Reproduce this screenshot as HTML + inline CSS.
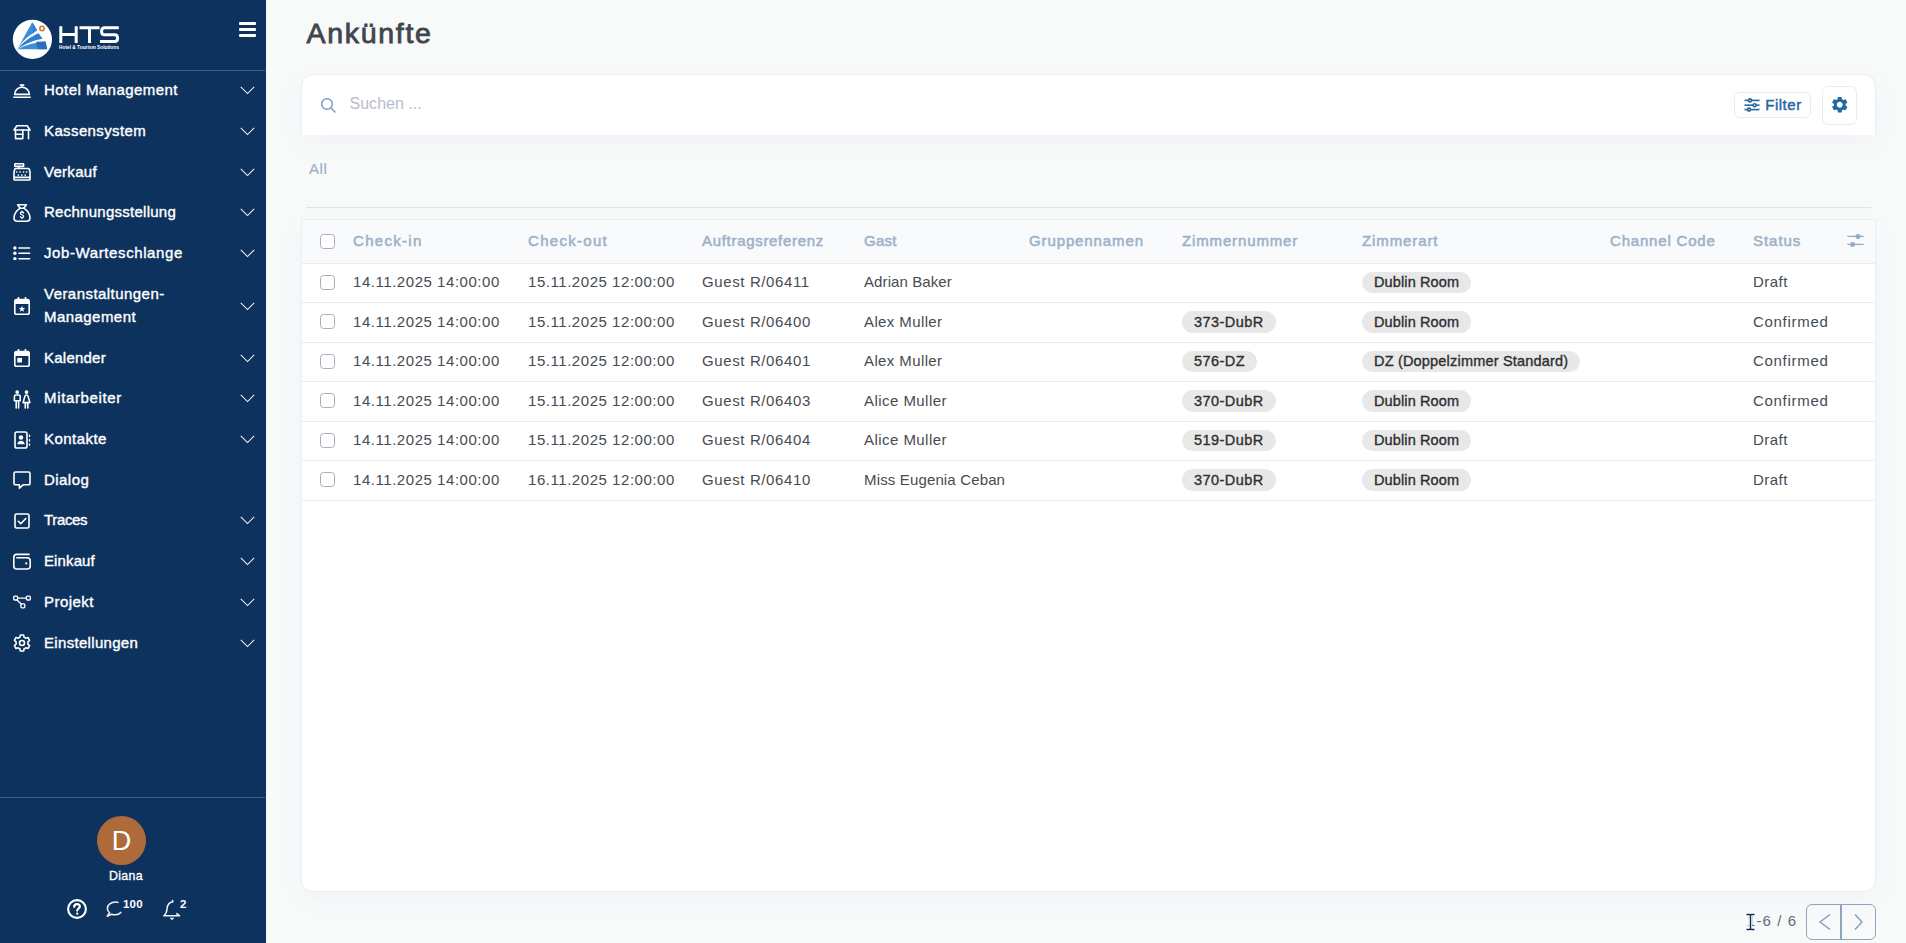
<!DOCTYPE html>
<html><head><meta charset="utf-8">
<style>
*{box-sizing:border-box;margin:0;padding:0}
html,body{width:1906px;height:943px;overflow:hidden;background:#f8fafa;font-family:"Liberation Sans",sans-serif}
#sb{position:absolute;left:0;top:0;width:266px;height:943px;background:#0e325e;color:#fff}
.hr{position:absolute;left:0;width:265px;height:1px;background:#44617f}
.tx{position:absolute;left:44px;font-size:15px;font-weight:normal;-webkit-text-stroke:0.38px #fff;letter-spacing:0.45px;line-height:23px;white-space:nowrap;color:#fff}
h1{position:absolute;left:306.5px;top:15.7px;font-size:28.5px;font-weight:normal;-webkit-text-stroke:0.85px #40464e;color:#40464e;letter-spacing:1.7px;line-height:34px}
#search{position:absolute;left:301px;top:74px;width:1575px;height:61px;background:#fff;border-radius:12px 12px 0 0;border:1px solid #e9eef5;border-bottom:none;box-shadow:0 8px 26px -2px rgba(80,90,180,0.055)}
#tab{position:absolute;left:309px;top:160px;font-size:15px;color:#9aaecb;letter-spacing:0.6px;-webkit-text-stroke:0.15px #9aaecb}
#tabline{position:absolute;left:306px;top:207px;width:1565px;height:1px;background:#dfe4ea}
#tbl{position:absolute;left:301px;top:219px;width:1575px;height:673px;background:#fff;border:1px solid #e9eef5;border-radius:0 0 12px 12px;box-shadow:0 8px 26px -2px rgba(80,90,180,0.05)}
#thead{position:absolute;left:0;top:0;width:1573px;height:44px;background:#f9fafb;border-bottom:1px solid #e7edf6}
.th{position:absolute;top:12px;font-size:15px;font-weight:normal;-webkit-text-stroke:0.55px #9db2c9;color:#9db2c9;white-space:nowrap;line-height:18px;letter-spacing:0.55px}
.row{position:absolute;left:0;width:1573px;height:40px;border-bottom:1px solid #e7edf6}
.td{position:absolute;top:8px;font-size:15px;color:#474b51;white-space:nowrap;line-height:20px;letter-spacing:0.45px}
.cb{position:absolute;left:18px;width:15px;height:15px;border:1px solid #a9adba;border-radius:3.5px;background:#fff}
.chip{position:absolute;top:8px;height:22px;line-height:22px;padding:0 12px;border-radius:11px;background:#e8e8e8;color:#2d2f31;font-weight:normal;-webkit-text-stroke:0.35px #2d2f31;letter-spacing:0.12px;font-size:14.5px;white-space:nowrap}

</style></head><body>
<div id="sb">
<svg style="position:absolute;left:0;top:0" width="130" height="70" viewBox="0 0 130 70">
<circle cx="32.4" cy="39.4" r="19.6" fill="#fff"/>
<path d="M32.2 22.2 L37.5 30.5 C29 35 22 41 17.2 49.3 Z" fill="#3b8fd9"/>
<path d="M17.6 49 C23 42 31 36.5 38.6 33.2 L42.6 38.8 C33 40.5 25 44 17.6 49 Z" fill="#2f7fcc"/>
<path d="M17.4 49.3 C26 45 35 42.2 45.5 41.5 L47.2 49.3 Z" fill="#3a90d8"/>
<path d="M36 41.8 L45.5 41.5 L47.2 49.3 L38 49.3 Z" fill="#2a6fb8"/>
<path d="M32.2 22.2 L35.2 26.8 L33.5 35 Z" fill="#2a6fb8" opacity="0.6"/>
<circle cx="42" cy="28.5" r="2.2" fill="#fff" stroke="#d2782e" stroke-width="1.5"/>
<g fill="none" stroke="#fff" stroke-width="3" stroke-linecap="butt">
<path d="M60.8 26.3 V43 M76.2 26.3 V43 M60.8 34.6 H76.2"/>
<path d="M79.5 27.8 H99.5 M89.5 27.8 V43"/>
<path d="M118.8 27.8 H104.8 Q101.6 27.8 101.6 31 V31.8 Q101.6 34.8 104.8 34.8 H114.6 Q117.6 34.8 117.6 38 V38.6 Q117.6 41.5 114.6 41.5 H100"/>
</g>
</svg>
<div style="position:absolute;left:59px;top:45px;font-size:4.8px;font-weight:bold;color:#fff;line-height:6px;white-space:nowrap">Hotel &amp; Tourism Solutions</div>
<div style="position:absolute;left:239px;top:22px;width:17px;height:3px;background:#fff;border-radius:1px"></div>
<div style="position:absolute;left:239px;top:28px;width:17px;height:3px;background:#fff;border-radius:1px"></div>
<div style="position:absolute;left:239px;top:34px;width:17px;height:3px;background:#fff;border-radius:1px"></div>
<div class="hr" style="top:70px"></div>
<svg style="position:absolute;left:13px;top:84px" width="18" height="15" viewBox="0 0 18 15" fill="none" stroke="#fff" stroke-width="1.6" stroke-linecap="round" stroke-linejoin="round" ><path d="M1.6 10.4 A7.4 7.2 0 0 1 16.4 10.4 Z" /><line x1="0.8" y1="13.3" x2="17.2" y2="13.3"/><line x1="9" y1="3.2" x2="9" y2="1.2"/><line x1="7.3" y1="1.1" x2="10.7" y2="1.1"/></svg>
<div class="tx" style="top:77.5px">Hotel Management</div>
<svg style="position:absolute;left:240px;top:86px" width="16" height="9" viewBox="0 0 16 9" fill="none" stroke="#f2f4f7" stroke-width="1.05"><path d="M0.8 0.8 L7.5 7.5 L14.2 0.8"/></svg>
<svg style="position:absolute;left:13px;top:125px" width="18" height="15" viewBox="0 0 18 15" fill="none" stroke="#fff" stroke-width="1.6" stroke-linecap="round" stroke-linejoin="round" ><path d="M3.8 0.8 H14.2 L17 5 H1 Z"/><path d="M2.5 5 V13.6 H9.8 V5"/><path d="M2.5 9.3 H9.8"/><path d="M15.5 5 V13.8"/></svg>
<div class="tx" style="top:118.5px;letter-spacing:0.386px">Kassensystem</div>
<svg style="position:absolute;left:240px;top:127px" width="16" height="9" viewBox="0 0 16 9" fill="none" stroke="#f2f4f7" stroke-width="1.05"><path d="M0.8 0.8 L7.5 7.5 L14.2 0.8"/></svg>
<svg style="position:absolute;left:13px;top:163px" width="18" height="18" viewBox="0 0 18 18" fill="none" stroke="#fff" stroke-width="1.6" stroke-linecap="round" stroke-linejoin="round" ><rect x="1.8" y="0.8" width="8.8" height="2.6" rx="0.4"/><line x1="6" y1="3.4" x2="6" y2="5.4"/><path d="M2.8 5.5 H15.2 Q16 5.5 16.3 6.3 L17 9 V16.2 Q17 17 16.2 17 H1.8 Q1 17 1 16.2 V9 L1.7 6.3 Q2 5.5 2.8 5.5 Z"/><line x1="1" y1="14.4" x2="17" y2="14.4"/><g stroke="none" fill="#fff"><rect x="2.9" y="8.3" width="1.5" height="1.4"/><rect x="6.3" y="8.3" width="1.5" height="1.4"/><rect x="9.8" y="8.3" width="1.5" height="1.4"/><rect x="12.9" y="8.3" width="1.5" height="1.4"/><rect x="4.6" y="11.4" width="1.5" height="1.4"/><rect x="8.1" y="11.4" width="1.5" height="1.4"/><rect x="11.5" y="11.4" width="1.5" height="1.4"/></g></svg>
<div class="tx" style="top:159.5px;letter-spacing:0.283px">Verkauf</div>
<svg style="position:absolute;left:240px;top:168px" width="16" height="9" viewBox="0 0 16 9" fill="none" stroke="#f2f4f7" stroke-width="1.05"><path d="M0.8 0.8 L7.5 7.5 L14.2 0.8"/></svg>
<svg style="position:absolute;left:13px;top:203px" width="18" height="19" viewBox="0 0 18 19" fill="none" stroke="#fff" stroke-width="1.6" stroke-linecap="round" stroke-linejoin="round" ><path d="M4.6 1.8 H13.4 L10.8 5.2 H7.2 Z"/><path d="M7.2 5.2 C3 8 1 11.5 1 15 C1 17.2 2.3 18.2 4.5 18.2 H13.5 C15.7 18.2 17 17.2 17 15 C17 11.5 15 8 10.8 5.2"/><path d="M10.5 10 C10.3 9.3 9.7 9 9 9 C8 9 7.4 9.6 7.4 10.3 C7.4 12 10.6 11.5 10.6 13.3 C10.6 14 10 14.6 9 14.6 C8.2 14.6 7.6 14.2 7.4 13.6" stroke-width="1.3"/><line x1="9" y1="8" x2="9" y2="9" stroke-width="1.2"/><line x1="9" y1="14.6" x2="9" y2="15.6" stroke-width="1.2"/></svg>
<div class="tx" style="top:199.5px;letter-spacing:0.263px">Rechnungsstellung</div>
<svg style="position:absolute;left:240px;top:208px" width="16" height="9" viewBox="0 0 16 9" fill="none" stroke="#f2f4f7" stroke-width="1.05"><path d="M0.8 0.8 L7.5 7.5 L14.2 0.8"/></svg>
<svg style="position:absolute;left:13px;top:246px" width="18" height="14" viewBox="0 0 18 14" fill="none" stroke="#fff" stroke-width="1.6" stroke-linecap="round" stroke-linejoin="round" ><g stroke="none" fill="#fff"><circle cx="1.9" cy="2" r="1.7"/><circle cx="1.9" cy="7.3" r="1.7"/><circle cx="1.9" cy="12.7" r="1.7"/></g><line x1="6" y1="2" x2="16.6" y2="2"/><line x1="6" y1="7.3" x2="16.6" y2="7.3"/><line x1="6" y1="12.7" x2="16.6" y2="12.7"/></svg>
<div class="tx" style="top:240.5px;letter-spacing:0.600px">Job-Warteschlange</div>
<svg style="position:absolute;left:240px;top:249px" width="16" height="9" viewBox="0 0 16 9" fill="none" stroke="#f2f4f7" stroke-width="1.05"><path d="M0.8 0.8 L7.5 7.5 L14.2 0.8"/></svg>
<svg style="position:absolute;left:14px;top:297px" width="16" height="18" viewBox="0 0 16 18" fill="none" stroke="#fff" stroke-width="1.6" stroke-linecap="round" stroke-linejoin="round" ><rect x="0.8" y="2.6" width="14.4" height="14.6" rx="1.8"/><rect x="0.8" y="2.6" width="14.4" height="4.4" fill="#fff" stroke="none"/><line x1="4.5" y1="0.4" x2="4.5" y2="3"/><line x1="11.5" y1="0.4" x2="11.5" y2="3"/><path d="M8.00 8.70 L8.85 10.93 L11.23 11.05 L9.38 12.55 L10.00 14.85 L8.00 13.55 L6.00 14.85 L6.62 12.55 L4.77 11.05 L7.15 10.93 Z" fill="#fff" stroke="none"/></svg>
<div class="tx" style="top:282px">Veranstaltungen-<br>Management</div>
<svg style="position:absolute;left:240px;top:302px" width="16" height="9" viewBox="0 0 16 9" fill="none" stroke="#f2f4f7" stroke-width="1.05"><path d="M0.8 0.8 L7.5 7.5 L14.2 0.8"/></svg>
<svg style="position:absolute;left:14px;top:349px" width="16" height="18" viewBox="0 0 16 18" fill="none" stroke="#fff" stroke-width="1.6" stroke-linecap="round" stroke-linejoin="round" ><rect x="0.8" y="2.6" width="14.4" height="14.6" rx="1.8"/><rect x="0.8" y="2.6" width="14.4" height="4.4" fill="#fff" stroke="none"/><line x1="4.5" y1="0.4" x2="4.5" y2="3"/><line x1="11.5" y1="0.4" x2="11.5" y2="3"/><rect x="3.3" y="8.9" width="4.7" height="4.6" fill="#fff" stroke="none"/></svg>
<div class="tx" style="top:345.5px;letter-spacing:0.236px">Kalender</div>
<svg style="position:absolute;left:240px;top:354px" width="16" height="9" viewBox="0 0 16 9" fill="none" stroke="#f2f4f7" stroke-width="1.05"><path d="M0.8 0.8 L7.5 7.5 L14.2 0.8"/></svg>
<svg style="position:absolute;left:13px;top:390px" width="18" height="19" viewBox="0 0 18 19" fill="none" stroke="#fff" stroke-width="1.6" stroke-linecap="round" stroke-linejoin="round" ><g stroke="none" fill="#fff"><circle cx="4.2" cy="2.1" r="1.9"/><circle cx="13.5" cy="2.1" r="1.9"/></g><path d="M1.4 10.8 V6.6 C1.4 5.6 2 5 3 5 H5.6 C6.6 5 7.2 5.6 7.2 6.6 V10.8 Z"/><line x1="3.2" y1="11" x2="3.2" y2="17.9"/><line x1="5.6" y1="11" x2="5.6" y2="17.9"/><path d="M13.5 5 C12.6 5 12.1 5.6 11.8 6.6 L10.1 12.6 H16.9 L15.2 6.6 C14.9 5.6 14.4 5 13.5 5 Z"/><line x1="12.3" y1="12.6" x2="12.3" y2="17.9"/><line x1="14.8" y1="12.6" x2="14.8" y2="17.9"/></svg>
<div class="tx" style="top:385.5px;letter-spacing:0.650px">Mitarbeiter</div>
<svg style="position:absolute;left:240px;top:394px" width="16" height="9" viewBox="0 0 16 9" fill="none" stroke="#f2f4f7" stroke-width="1.05"><path d="M0.8 0.8 L7.5 7.5 L14.2 0.8"/></svg>
<svg style="position:absolute;left:14px;top:431px" width="17" height="18" viewBox="0 0 17 18" fill="none" stroke="#fff" stroke-width="1.6" stroke-linecap="round" stroke-linejoin="round" ><rect x="1" y="1" width="12" height="16" rx="1.8"/><g stroke="none" fill="#fff"><circle cx="7" cy="6.5" r="2.2"/><path d="M3.3 13.3 C3.5 11 5 9.8 7 9.8 C9 9.8 10.5 11 10.7 13.3 Z"/></g><g stroke-width="1.3"><line x1="15.5" y1="4.2" x2="15.5" y2="5.6"/><line x1="15.5" y1="8.6" x2="15.5" y2="10"/><line x1="15.5" y1="12.9" x2="15.5" y2="14.3"/></g></svg>
<div class="tx" style="top:426.5px">Kontakte</div>
<svg style="position:absolute;left:240px;top:435px" width="16" height="9" viewBox="0 0 16 9" fill="none" stroke="#f2f4f7" stroke-width="1.05"><path d="M0.8 0.8 L7.5 7.5 L14.2 0.8"/></svg>
<svg style="position:absolute;left:13px;top:471px" width="18" height="18" viewBox="0 0 18 18" fill="none" stroke="#fff" stroke-width="1.6" stroke-linecap="round" stroke-linejoin="round" ><path d="M2.4 1 H15.6 Q17 1 17 2.4 V12.4 Q17 13.8 15.6 13.8 H10.2 L6.4 17.2 V13.8 H2.4 Q1 13.8 1 12.4 V2.4 Q1 1 2.4 1 Z"/></svg>
<div class="tx" style="top:467.5px">Dialog</div>
<svg style="position:absolute;left:14px;top:513px" width="16" height="16" viewBox="0 0 16 16" fill="none" stroke="#fff" stroke-width="1.6" stroke-linecap="round" stroke-linejoin="round" ><rect x="1" y="1" width="14" height="14" rx="1.5"/><path d="M4.3 8.3 L6.8 10.8 L11.8 5.5"/></svg>
<div class="tx" style="top:507.5px;letter-spacing:-0.350px">Traces</div>
<svg style="position:absolute;left:240px;top:516px" width="16" height="9" viewBox="0 0 16 9" fill="none" stroke="#f2f4f7" stroke-width="1.05"><path d="M0.8 0.8 L7.5 7.5 L14.2 0.8"/></svg>
<svg style="position:absolute;left:13px;top:553px" width="18" height="17" viewBox="0 0 18 17" fill="none" stroke="#fff" stroke-width="1.6" stroke-linecap="round" stroke-linejoin="round" ><path d="M16 1.4 H3.8 Q0.8 1.4 0.8 4.4 V13 Q0.8 16 3.8 16 H14.2 Q17.2 16 17.2 13 V7.8 Q17.2 4.8 14.2 4.8 H3.8"/><circle cx="13.2" cy="10.4" r="1.1" fill="#fff" stroke="none"/></svg>
<div class="tx" style="top:548.5px;letter-spacing:0.117px">Einkauf</div>
<svg style="position:absolute;left:240px;top:557px" width="16" height="9" viewBox="0 0 16 9" fill="none" stroke="#f2f4f7" stroke-width="1.05"><path d="M0.8 0.8 L7.5 7.5 L14.2 0.8"/></svg>
<svg style="position:absolute;left:13px;top:595px" width="18" height="14" viewBox="0 0 18 14" fill="none" stroke="#fff" stroke-width="1.6" stroke-linecap="round" stroke-linejoin="round" ><g stroke-width="1.35"><rect x="0.7" y="1.1" width="3.9" height="3.9" rx="1"/><rect x="13.4" y="1.1" width="3.9" height="3.9" rx="1"/><rect x="7.9" y="8.9" width="3.9" height="3.9" rx="1"/><line x1="4.6" y1="3.05" x2="13.4" y2="3.05"/><line x1="4" y1="5" x2="8.1" y2="9.1"/></g></svg>
<div class="tx" style="top:589.5px">Projekt</div>
<svg style="position:absolute;left:240px;top:598px" width="16" height="9" viewBox="0 0 16 9" fill="none" stroke="#f2f4f7" stroke-width="1.05"><path d="M0.8 0.8 L7.5 7.5 L14.2 0.8"/></svg>
<svg style="position:absolute;left:13px;top:634px" width="18" height="18" viewBox="0 0 18 18" fill="none" stroke="#fff" stroke-width="1.6" stroke-linecap="round" stroke-linejoin="round" ><path d="M7.4 1 H10.6 L11.1 3.2 C11.7 3.4 12.3 3.8 12.8 4.2 L15 3.5 L16.6 6.3 L14.9 7.8 C15 8.6 15 9.4 14.9 10.2 L16.6 11.7 L15 14.5 L12.8 13.8 C12.3 14.2 11.7 14.6 11.1 14.8 L10.6 17 H7.4 L6.9 14.8 C6.3 14.6 5.7 14.2 5.2 13.8 L3 14.5 L1.4 11.7 L3.1 10.2 C3 9.4 3 8.6 3.1 7.8 L1.4 6.3 L3 3.5 L5.2 4.2 C5.7 3.8 6.3 3.4 6.9 3.2 Z"/><circle cx="9" cy="9" r="2.5"/></svg>
<div class="tx" style="top:630.5px;letter-spacing:0.317px">Einstellungen</div>
<svg style="position:absolute;left:240px;top:639px" width="16" height="9" viewBox="0 0 16 9" fill="none" stroke="#f2f4f7" stroke-width="1.05"><path d="M0.8 0.8 L7.5 7.5 L14.2 0.8"/></svg>
<div class="hr" style="top:797px"></div>
<div style="position:absolute;left:97px;top:816px;width:49px;height:49px;border-radius:50%;background:#ae6a3a;color:#fff;font-size:27px;text-align:center;line-height:51px">D</div>
<div style="position:absolute;left:96px;top:867.8px;width:60px;text-align:center;font-size:12.4px;font-weight:normal;-webkit-text-stroke:0.3px #fff;letter-spacing:0.3px;color:#fff;line-height:16px">Diana</div>
<svg style="position:absolute;left:66px;top:898px" width="22" height="22" viewBox="0 0 22 22" fill="none" stroke="#fff" stroke-width="2.1"><circle cx="11" cy="11" r="8.9"/><path d="M8.2 8.8 C8.2 7.2 9.4 6.2 11 6.2 C12.6 6.2 13.8 7.2 13.8 8.6 C13.8 10.4 11.2 10.6 11.2 12.6" stroke-linecap="round" stroke-width="2.2"/><circle cx="11.2" cy="15.6" r="1.2" fill="#fff" stroke="none"/></svg>
<svg style="position:absolute;left:105px;top:899px" width="20" height="20" viewBox="0 0 20 20" fill="none" stroke="#f4f4f6" stroke-width="1.5" stroke-linecap="round" stroke-linejoin="round"><path d="M13 3.4 C12.4 3.1 11.6 3 10.8 3 C6 3 2.4 5.8 2.4 9.4 C2.4 11 3.2 12.6 4.6 13.6 L2.2 17.2 L6.6 15.2 C7.8 15.6 9 15.8 10.4 15.8 C12.6 15.8 14.6 14.8 15.8 13.4"/></svg>
<div style="position:absolute;left:123px;top:898px;font-size:11.5px;font-weight:bold;color:#fff;line-height:12px;letter-spacing:0.2px">100</div>
<svg style="position:absolute;left:161px;top:898px" width="22" height="23" viewBox="0 0 22 23" fill="none" stroke="#f4f4f6" stroke-width="1.5" stroke-linecap="round" stroke-linejoin="round"><path d="M11.6 3.8 C8 4.6 6.2 7.6 6 11 C5.8 14.2 4.8 16.4 2.8 17.8 H18.6 L15.8 15.6"/><path d="M11.6 3.8 L11.6 2.6"/><path d="M9.6 20.2 H12.6 L11.1 21.4 Z" fill="#fff" stroke-width="1"/></svg>
<div style="position:absolute;left:180px;top:898px;font-size:11.5px;font-weight:bold;color:#fff;line-height:12px">2</div>
</div>
<h1>Ankünfte</h1>
<div id="search"><svg style="position:absolute;left:18px;top:22px" width="17" height="17" viewBox="0 0 17 17" fill="none" stroke="#7b9cc2" stroke-width="1.55" stroke-linecap="round"><circle cx="7" cy="7" r="5.3"/><line x1="11" y1="11" x2="15" y2="15"/></svg><div style="position:absolute;left:47.5px;top:18.6px;font-size:16px;color:#b8bdca;line-height:20px;letter-spacing:0.02px">Suchen ...</div><div style="position:absolute;left:1432px;top:17px;width:77px;height:26px;border:1px solid #e8edf2;border-radius:6px"><svg style="position:absolute;left:9px;top:5px" width="16" height="15" viewBox="0 0 16 15" fill="none" stroke="#26679f" stroke-width="1.6"><line x1="0.5" y1="2.4" x2="15.5" y2="2.4"/><line x1="0.5" y1="7.2" x2="15.5" y2="7.2"/><line x1="0.5" y1="11.6" x2="15.5" y2="11.6"/><circle cx="6" cy="2.4" r="1.5" fill="#fff"/><circle cx="10.6" cy="7.2" r="1.5" fill="#fff"/><circle cx="5" cy="11.6" r="1.5" fill="#fff"/></svg><div style="position:absolute;left:30.3px;top:2px;font-size:15px;font-weight:normal;-webkit-text-stroke:0.45px #26679f;letter-spacing:0.5px;color:#26679f;line-height:19px">Filter</div></div><div style="position:absolute;left:1520px;top:11px;width:35px;height:38.6px;border:1px solid #e8edf2;border-radius:6px"><svg style="position:absolute;left:7px;top:8px" width="19.5" height="19.5" viewBox="0 0 24 24"><path fill="#26679f" d="M19.14 12.94c.04-.3.06-.61.06-.94 0-.32-.02-.64-.07-.94l2.03-1.58a.49.49 0 0 0 .12-.61l-1.92-3.32a.488.488 0 0 0-.59-.22l-2.39.96c-.5-.38-1.03-.7-1.62-.94l-.36-2.54a.484.484 0 0 0-.48-.41h-3.84c-.24 0-.43.17-.47.41l-.36 2.54c-.59.24-1.13.57-1.62.94l-2.39-.96c-.22-.08-.47 0-.59.22L2.74 8.87c-.12.21-.08.47.12.61l2.03 1.58c-.05.3-.09.63-.09.94s.02.64.07.94l-2.03 1.58a.49.49 0 0 0-.12.61l1.92 3.32c.12.22.37.29.59.22l2.39-.96c.5.38 1.03.7 1.62.94l.36 2.54c.05.24.24.41.48.41h3.84c.24 0 .44-.17.47-.41l.36-2.54c.59-.24 1.13-.56 1.62-.94l2.39.96c.22.08.47 0 .59-.22l1.92-3.32c.12-.22.07-.47-.12-.61l-2.01-1.58zM12 15.6c-1.98 0-3.6-1.62-3.6-3.6s1.62-3.6 3.6-3.6 3.6 1.62 3.6 3.6-1.62 3.6-3.6 3.6z"/></svg></div></div>
<div id="tab">All</div>
<div id="tabline"></div>
<div id="tbl"><div id="thead"><div class="cb" style="top:14px"></div><div class="th" style="left:51px;letter-spacing:1.307px">Check-in</div><div class="th" style="left:226px;letter-spacing:1.300px">Check-out</div><div class="th" style="left:400px;letter-spacing:0.690px">Auftragsreferenz</div><div class="th" style="left:562px;letter-spacing:0.283px">Gast</div><div class="th" style="left:727px;letter-spacing:0.886px">Gruppennamen</div><div class="th" style="left:880px;letter-spacing:0.859px">Zimmernummer</div><div class="th" style="left:1060px;letter-spacing:0.900px">Zimmerart</div><div class="th" style="left:1308px;letter-spacing:0.814px">Channel Code</div><div class="th" style="left:1451px;letter-spacing:0.970px">Status</div><svg style="position:absolute;left:1545px;top:13px" width="18" height="14" viewBox="0 0 18 14" fill="none" stroke="#93abc8" stroke-width="1.3" stroke-linecap="round"><line x1="0.8" y1="3.4" x2="16.2" y2="3.4"/><line x1="0.8" y1="11.4" x2="16.2" y2="11.4"/><circle cx="11" cy="3.4" r="2.5" fill="#93abc8" stroke="none"/><circle cx="5.6" cy="11.4" r="2.5" fill="#93abc8" stroke="none"/></svg></div><div class="row" style="top:44px;height:39px"><div class="cb" style="top:11px"></div><div class="td" style="left:51px;top:8px;letter-spacing:0.544px">14.11.2025 14:00:00</div><div class="td" style="left:226px;top:8px;letter-spacing:0.544px">15.11.2025 12:00:00</div><div class="td" style="left:400px;top:8px;letter-spacing:0.617px">Guest R/06411</div><div class="td" style="left:562px;top:8px;letter-spacing:0.095px">Adrian Baker</div><div class="td" style="left:1451px;top:8px;letter-spacing:0.450px">Draft</div><div class="chip" style="left:1060px;height:21px;line-height:21px;letter-spacing:0.12px">Dublin Room</div></div><div class="row" style="top:83px;height:40px"><div class="cb" style="top:11px"></div><div class="td" style="left:51px;top:9px;letter-spacing:0.544px">14.11.2025 14:00:00</div><div class="td" style="left:226px;top:9px;letter-spacing:0.544px">15.11.2025 12:00:00</div><div class="td" style="left:400px;top:9px;letter-spacing:0.617px">Guest R/06400</div><div class="td" style="left:562px;top:9px;letter-spacing:0.390px">Alex Muller</div><div class="td" style="left:1451px;top:9px;letter-spacing:0.700px">Confirmed</div><div class="chip" style="left:880px;height:22px;line-height:22px;letter-spacing:0.45px">373-DubR</div><div class="chip" style="left:1060px;height:22px;line-height:22px;letter-spacing:0.12px">Dublin Room</div></div><div class="row" style="top:123px;height:39px"><div class="cb" style="top:11px"></div><div class="td" style="left:51px;top:8px;letter-spacing:0.544px">14.11.2025 14:00:00</div><div class="td" style="left:226px;top:8px;letter-spacing:0.544px">15.11.2025 12:00:00</div><div class="td" style="left:400px;top:8px;letter-spacing:0.617px">Guest R/06401</div><div class="td" style="left:562px;top:8px;letter-spacing:0.390px">Alex Muller</div><div class="td" style="left:1451px;top:8px;letter-spacing:0.700px">Confirmed</div><div class="chip" style="left:880px;height:21px;line-height:21px;letter-spacing:0.45px">576-DZ</div><div class="chip" style="left:1060px;height:21px;line-height:21px;letter-spacing:0.19px">DZ (Doppelzimmer Standard)</div></div><div class="row" style="top:162px;height:40px"><div class="cb" style="top:11px"></div><div class="td" style="left:51px;top:9px;letter-spacing:0.544px">14.11.2025 14:00:00</div><div class="td" style="left:226px;top:9px;letter-spacing:0.544px">15.11.2025 12:00:00</div><div class="td" style="left:400px;top:9px;letter-spacing:0.617px">Guest R/06403</div><div class="td" style="left:562px;top:9px;letter-spacing:0.450px">Alice Muller</div><div class="td" style="left:1451px;top:9px;letter-spacing:0.700px">Confirmed</div><div class="chip" style="left:880px;height:22px;line-height:22px;letter-spacing:0.45px">370-DubR</div><div class="chip" style="left:1060px;height:22px;line-height:22px;letter-spacing:0.12px">Dublin Room</div></div><div class="row" style="top:202px;height:39px"><div class="cb" style="top:11px"></div><div class="td" style="left:51px;top:8px;letter-spacing:0.544px">14.11.2025 14:00:00</div><div class="td" style="left:226px;top:8px;letter-spacing:0.544px">15.11.2025 12:00:00</div><div class="td" style="left:400px;top:8px;letter-spacing:0.617px">Guest R/06404</div><div class="td" style="left:562px;top:8px;letter-spacing:0.450px">Alice Muller</div><div class="td" style="left:1451px;top:8px;letter-spacing:0.450px">Draft</div><div class="chip" style="left:880px;height:21px;line-height:21px;letter-spacing:0.45px">519-DubR</div><div class="chip" style="left:1060px;height:21px;line-height:21px;letter-spacing:0.12px">Dublin Room</div></div><div class="row" style="top:241px;height:40px"><div class="cb" style="top:11px"></div><div class="td" style="left:51px;top:9px;letter-spacing:0.544px">14.11.2025 14:00:00</div><div class="td" style="left:226px;top:9px;letter-spacing:0.544px">16.11.2025 12:00:00</div><div class="td" style="left:400px;top:9px;letter-spacing:0.617px">Guest R/06410</div><div class="td" style="left:562px;top:9px;letter-spacing:0.150px">Miss Eugenia Ceban</div><div class="td" style="left:1451px;top:9px;letter-spacing:0.450px">Draft</div><div class="chip" style="left:880px;height:22px;line-height:22px;letter-spacing:0.45px">370-DubR</div><div class="chip" style="left:1060px;height:22px;line-height:22px;letter-spacing:0.12px">Dublin Room</div></div></div>
<div style="position:absolute;left:1747px;top:912px;font-size:15px;color:#5f6b77;line-height:18px;letter-spacing:1.1px">1-6 / 6</div>
<svg style="position:absolute;left:1744px;top:912px" width="13" height="20" viewBox="0 0 13 20"><path d="M2.5 2.5 H5.5 C6 2.5 6.5 3 6.5 3.5 C6.5 3 7 2.5 7.5 2.5 H10.5 M6.5 3.5 V16.5 M2.5 17.5 H5.5 C6 17.5 6.5 17 6.5 16.5 C6.5 17 7 17.5 7.5 17.5 H10.5" fill="none" stroke="#fff" stroke-width="3.2" stroke-linecap="round"/><path d="M2.5 2.5 H5.5 C6 2.5 6.5 3 6.5 3.5 C6.5 3 7 2.5 7.5 2.5 H10.5 M6.5 3.5 V16.5 M2.5 17.5 H5.5 C6 17.5 6.5 17 6.5 16.5 C6.5 17 7 17.5 7.5 17.5 H10.5" fill="none" stroke="#0f2a52" stroke-width="1.4"/></svg>
<div style="position:absolute;left:1806px;top:904px;width:70px;height:36px;border:1px solid #8ea5c1;border-radius:6px"><div style="position:absolute;left:33px;top:0;width:2px;height:34px;background:#8ea5c1"></div><svg style="position:absolute;left:10px;top:8px" width="16" height="18" viewBox="0 0 16 18" fill="none" stroke="#7f98b5" stroke-width="1.3"><path d="M13 1.5 L3 9 L13 16.5"/></svg><svg style="position:absolute;left:45px;top:8px" width="16" height="18" viewBox="0 0 16 18" fill="none" stroke="#7f98b5" stroke-width="1.3"><path d="M3 1.5 L10 9 L3 16.5"/></svg></div>
</body></html>
